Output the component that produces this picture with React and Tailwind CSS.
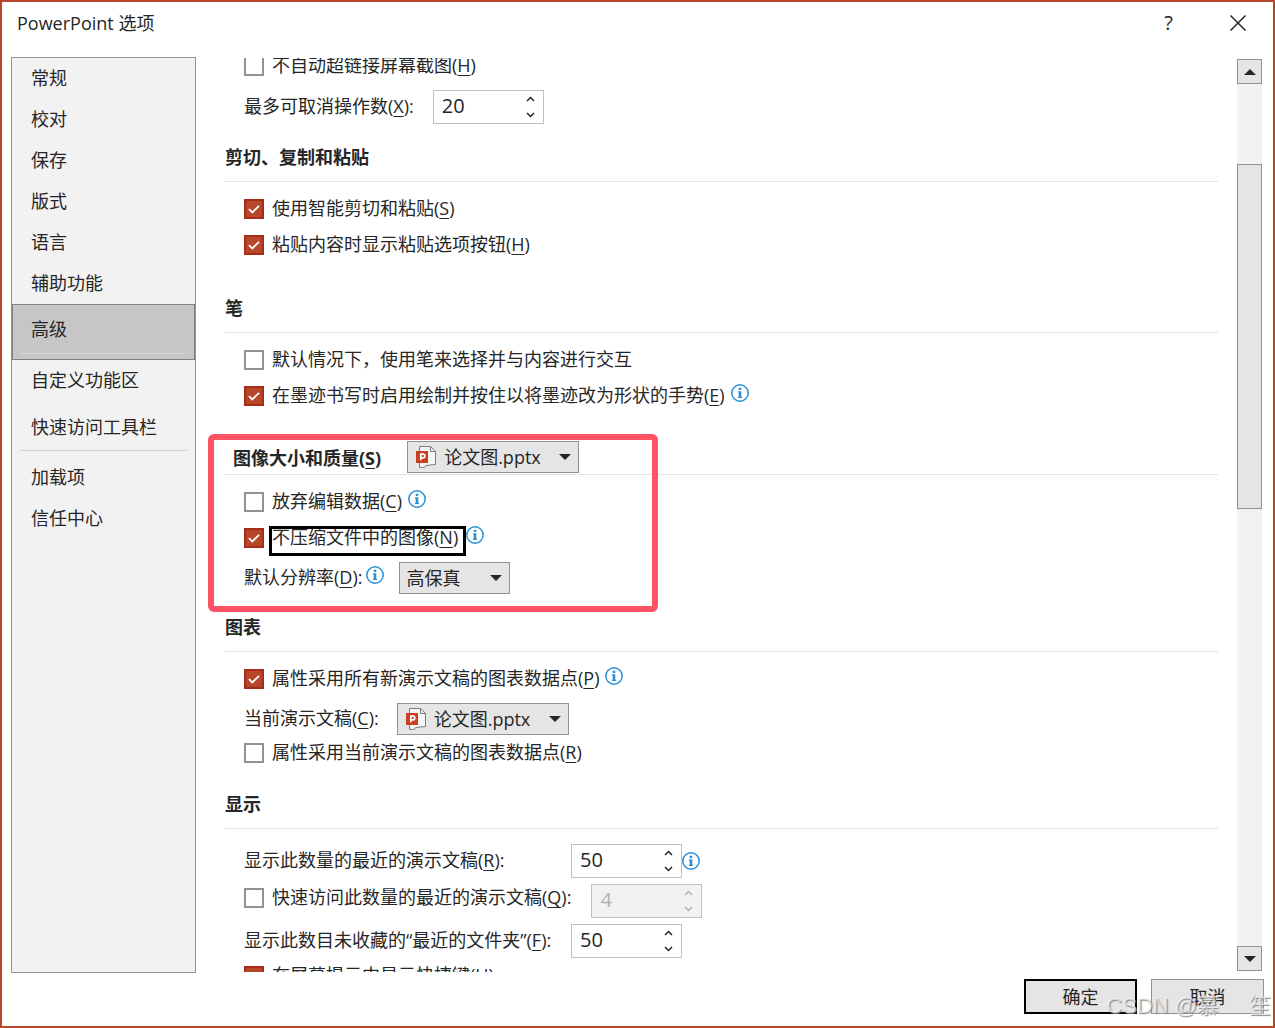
import React, { useState } from 'react';
import clsx from 'clsx';

const sidebarTop = ['常规', '校对', '保存', '版式', '语言', '辅助功能'];

function InfoIcon({ raised = true }) {
  return (
    <svg
      width="18"
      height="18"
      viewBox="0 0 18 18"
      role="img"
      aria-label="信息"
      className={clsx('shrink-0', raised && 'mb-[7px]')}
    >
      <circle cx="9" cy="9" r="8.2" fill="#fff" stroke="#2a90d6" strokeWidth="1.5" />
      <path d="M7.7 3.8h2.6v2.2H7.7zM7 7.2h3.3v5.6H11V14H7v-1.2h.7V8.4H7z" fill="#2a90d6" />
    </svg>
  );
}

// Document sheet with the red P badge
function FileIcon() {
  return (
    <svg width="20" height="22" viewBox="0 0 20 22" className="pointer-events-none absolute left-[9px] top-[5px]" aria-hidden="true">
      <path d="M3.5 .5H14.5L19.5 5.5V18.5L14 19L9.5 19.7L8.5 21.4H3.5Z" fill="#f6f6f6" stroke="#7a7a7a" />
      <path d="M14.5 .5V5.5H19.5" fill="none" stroke="#7a7a7a" />
      <rect x="0" y="5" width="12" height="12" fill="#c8401f" />
      <path d="M4.8 14.2V8.2H7a1.7 1.7 0 0 1 0 3.6H4.8" fill="none" stroke="#fff" strokeWidth="1.7" />
    </svg>
  );
}

function Key({ children }) {
  return <span className="underline decoration-1 underline-offset-[3px]">{children}</span>;
}

function Check({ label, hotkey, on, id, focused }) {
  const [checked, setChecked] = useState(!!on);
  return (
    <div className="flex items-center">
      <span className="relative mr-2 h-5 w-5 shrink-0">
        <input
          id={id}
          type="checkbox"
          checked={checked}
          onChange={() => setChecked(!checked)}
          className="block h-5 w-5 appearance-none border-2 border-[#929292] bg-white checked:border-[#a92b1a] checked:bg-[#b7472a]"
        />
        {checked && (
          <svg viewBox="0 0 20 20" className="pointer-events-none absolute inset-0 h-5 w-5" aria-hidden="true">
            <path d="M5 10.2L8.3 13.5L15 6.8" fill="none" stroke="#fff" strokeWidth="1.8" />
          </svg>
        )}
      </span>
      <label htmlFor={id} className={clsx('relative whitespace-nowrap pb-0.5', focused && 'pr-1')}>
        {label}
        {hotkey && <>(<Key>{hotkey}</Key>)</>}
        {focused && <span className="absolute -left-[3px] -right-1 top-px h-[30px] border-3 border-black" />}
      </label>
    </div>
  );
}

function Spinner({ id, labelledBy, initial, disabled }) {
  const [value, setValue] = useState(initial);
  const arrow = 'flex h-4 w-[25px] items-center justify-center';
  return (
    <div
      className={clsx(
        'flex h-[34px] w-[111px] shrink-0 items-center border border-[#c0c0c0]',
        disabled ? 'bg-[#f2f2f2] text-[#b1b1b1]' : 'bg-white text-[#262626]'
      )}
    >
      <input
        id={id}
        type="text"
        inputMode="numeric"
        aria-labelledby={labelledBy}
        value={value}
        disabled={disabled}
        onChange={(e) => setValue(e.target.value)}
        className="w-full min-w-0 flex-1 bg-transparent pb-0.5 pl-2 text-xl leading-6 outline-none"
      />
      <div className="flex flex-col">
        <button type="button" disabled={disabled} aria-label="增加" className={arrow} onClick={() => setValue(Number(value) + 1)}>
          <svg width="9" height="6" viewBox="0 0 9 6"><path d="M1 5L4.5 1.5L8 5" fill="none" stroke="currentColor" strokeWidth="1.5" /></svg>
        </button>
        <button type="button" disabled={disabled} aria-label="减少" className={arrow} onClick={() => setValue(Number(value) - 1)}>
          <svg width="9" height="6" viewBox="0 0 9 6"><path d="M1 1L4.5 4.5L8 1" fill="none" stroke="currentColor" strokeWidth="1.5" /></svg>
        </button>
      </div>
    </div>
  );
}

function Dropdown({ id, options, file }) {
  return (
    <div className={clsx('relative shrink-0', file ? 'w-[172px]' : 'w-[111px]')}>
      <select
        id={id}
        className={clsx(
          'block h-8 w-full appearance-none border border-[#929292] bg-[#e5e5e5] font-normal outline-none',
          file ? 'pl-9' : 'pl-1.5'
        )}
      >
        {options.map((o) => <option key={o}>{o}</option>)}
      </select>
      {file && <FileIcon />}
      <svg width="12" height="6" viewBox="0 0 12 6" className="pointer-events-none absolute right-2 top-[13px]" aria-hidden="true">
        <path d="M0 0H12L6 6Z" fill="#262626" />
      </svg>
    </div>
  );
}

function Heading({ children, className }) {
  return (
    <h2 className={clsx('border-b border-[#e3e3e3] pb-3 font-bold', className)}>{children}</h2>
  );
}

function SideItem({ children }) {
  return <button type="button" className="h-[41px] w-full pb-0.5 pl-[19px] text-left">{children}</button>;
}

function ScrollBar() {
  const btn = 'flex h-[25px] w-full items-center justify-center border border-[#929292] bg-[#e5e5e5]';
  return (
    <div className="my-0.5 flex w-[25px] shrink-0 flex-col bg-[#f2f2f2]">
      <button type="button" aria-label="向上滚动" className={btn}>
        <svg width="12" height="6" viewBox="0 0 12 6"><path d="M0 6H12L6 0Z" fill="#262626" /></svg>
      </button>
      <div className="flex flex-1 flex-col">
        <div className="flex-[80]" />
        <div className="flex-[343] border border-[#929292] bg-[#e5e5e5]" />
        <div className="flex-[437]" />
      </div>
      <button type="button" aria-label="向下滚动" className={btn}>
        <svg width="12" height="6" viewBox="0 0 12 6"><path d="M0 0H12L6 6Z" fill="#262626" /></svg>
      </button>
    </div>
  );
}

export default function App() {
  return (
    <div className="relative flex h-screen flex-col overflow-hidden border-2 border-[#b7472a] bg-white font-['Open_Sans','Noto_Sans_CJK_SC',sans-serif] text-lg leading-6 text-[#262626]">
      {/* Title bar */}
      <header className="flex h-[55px] shrink-0 items-start justify-between pl-[15px] pr-[27px] pt-[9px]">
        <h1>PowerPoint 选项</h1>
        <div className="flex items-center gap-[57px]">
          <button type="button" aria-label="帮助" className="text-xl leading-6">?</button>
          <button type="button" aria-label="关闭" className="flex h-6 items-center">
            <svg width="16" height="16" viewBox="0 0 16 16"><path d="M.5.5L15.5 15.5M15.5.5L.5 15.5" stroke="#262626" strokeWidth="1.5" /></svg>
          </button>
        </div>
      </header>

      <div className="flex min-h-0 flex-1 pl-[9px] pr-[11px]">
        {/* Category list */}
        <nav className="w-[185px] shrink-0 border border-[#929292] bg-[#f2f2f2]">
          {sidebarTop.map((name) => <SideItem key={name}>{name}</SideItem>)}
          <div className="border border-[#808080] bg-[#c6c6c6] pb-[5px] pt-1">
            <button type="button" aria-current="page" className="h-[41px] w-full pb-0.5 pl-[18px] text-left">高级</button>
            <div className="mx-[7px] mt-[3px] h-px bg-[#d5d5d5]" />
          </div>
          <SideItem>自定义功能区</SideItem>
          <div className="pt-1.5"><SideItem>快速访问工具栏</SideItem></div>
          <div className="mx-2 mb-1.5 mt-0.5 h-px bg-[#d2d2d2]" />
          <SideItem>加载项</SideItem>
          <SideItem>信任中心</SideItem>
        </nav>

        {/* Options */}
        <main className="my-px min-w-0 flex-1 overflow-hidden pl-[29px] pr-[19px]">
          <section className="-mt-[10px]">
            <div className="pl-[19px]">
              <div className="flex h-9 items-center"><Check id="hyper" label="不自动超链接屏幕截图" hotkey="H" /></div>
              <div className="flex h-[46px] items-center gap-[19px]">
                <label htmlFor="undo" className="pb-0.5">最多可取消操作数(<Key>X</Key>):</label>
                <Spinner id="undo" initial="20" />
              </div>
            </div>
          </section>

          <section>
            <Heading className="pt-[15px]">剪切、复制和粘贴</Heading>
            <div className="pl-[19px] pt-[9px]">
              <div className="flex h-9 items-center"><Check id="smart" on label="使用智能剪切和粘贴" hotkey="S" /></div>
              <div className="flex h-9 items-center"><Check id="paste" on label="粘贴内容时显示粘贴选项按钮" hotkey="H" /></div>
            </div>
          </section>

          <section>
            <Heading className="pt-[33px]">笔</Heading>
            <div className="pl-[19px] pt-[9px]">
              <div className="flex h-9 items-center"><Check id="pen" label="默认情况下，使用笔来选择并与内容进行交互" /></div>
              <div className="flex h-9 items-center gap-1.5">
                <Check id="ink" on label="在墨迹书写时启用绘制并按住以将墨迹改为形状的手势" hotkey="E" />
                <InfoIcon />
              </div>
            </div>
          </section>

          <section className="relative pt-[27px]">
            <div className="flex h-[34px] items-start gap-[26px] border-b border-[#e3e3e3] pl-2">
              <h2 className="pt-[5px] font-bold"><label htmlFor="image-file">图像大小和质量(<Key>S</Key>)</label></h2>
              <Dropdown id="image-file" file options={['论文图.pptx']} />
            </div>
            <div className="pl-[19px] pt-[9px]">
              <div className="flex h-9 items-center gap-1.5">
                <Check id="discard" label="放弃编辑数据" hotkey="C" />
                <InfoIcon />
              </div>
              <div className="flex h-9 items-center gap-1">
                <Check id="compress" on focused label="不压缩文件中的图像" hotkey="N" />
                <InfoIcon />
              </div>
              <div className="flex h-11 items-center">
                <label htmlFor="dpi" className="mr-1 pb-0.5">默认分辨率(<Key>D</Key>):</label>
                <InfoIcon />
                <div className="ml-[15px]"><Dropdown id="dpi" options={['高保真']} /></div>
              </div>
            </div>
            {/* Red highlight frame */}
            <div className="pointer-events-none absolute -left-[17px] bottom-[-12px] top-5 w-[450px] rounded-md border-6 border-[#ff5263]" />
          </section>

          <section>
            <Heading className="pt-[15px]">图表</Heading>
            <div className="pl-[19px] pt-[9px]">
              <div className="flex h-9 items-center gap-1.5">
                <Check id="points-all" on label="属性采用所有新演示文稿的图表数据点" hotkey="P" />
                <InfoIcon />
              </div>
              <div className="mt-1 flex h-9 items-center gap-[18px]">
                <label htmlFor="current" className="pb-0.5">当前演示文稿(<Key>C</Key>):</label>
                <Dropdown id="current" file options={['论文图.pptx']} />
              </div>
              <div className="flex h-8 items-center"><Check id="points-current" label="属性采用当前演示文稿的图表数据点" hotkey="R" /></div>
            </div>
          </section>

          <section>
            <Heading className="pt-[23px]">显示</Heading>
            <div className="pl-[19px] pt-3">
              <div className="flex h-10 items-center">
                <label htmlFor="recent" className="w-[327px] pb-0.5">显示此数量的最近的演示文稿(<Key>R</Key>):</label>
                <Spinner id="recent" initial="50" />
                <InfoIcon raised={false} />
              </div>
              <div className="flex h-10 items-center gap-5">
                <div id="quick-label" className="flex h-full items-center pb-1.5">
                  <Check id="quick" label={<>快速访问此数量的最近的演示文稿(<Key>Q</Key>):</>} />
                </div>
                <Spinner id="quick-count" labelledBy="quick-label" initial="4" disabled />
              </div>
              <div className="flex h-10 items-center">
                <label htmlFor="folders" className="w-[327px] pb-0.5">显示此数目未收藏的“最近的文件夹”(<Key>F</Key>):</label>
                <Spinner id="folders" initial="50" />
              </div>
              <div className="flex h-[30px] items-center"><Check id="tips" on label="在屏幕提示中显示快捷键" hotkey="U" /></div>
            </div>
          </section>
        </main>

        <ScrollBar />
      </div>

      <footer className="flex shrink-0 justify-end gap-3.5 pb-3 pr-[9px] pt-1.5">
        <button type="button" className="h-[35px] w-[113px] border-2 border-black bg-[#e5e5e5]">确定</button>
        <button type="button" className="h-[35px] w-[113px] border border-[#929292] bg-[#e5e5e5]">取消</button>
      </footer>

      {/* Watermark */}
      <div className="pointer-events-none absolute bottom-1.5 right-0.5 flex gap-[30px] whitespace-nowrap font-['Liberation_Sans','Noto_Sans_CJK_SC',sans-serif] text-[22px] leading-7 text-white/60 [text-shadow:1px_1px_1px_#8a8a8a]">
        <span>CSDN @慕</span>
        <span>笙</span>
      </div>
    </div>
  );
}
